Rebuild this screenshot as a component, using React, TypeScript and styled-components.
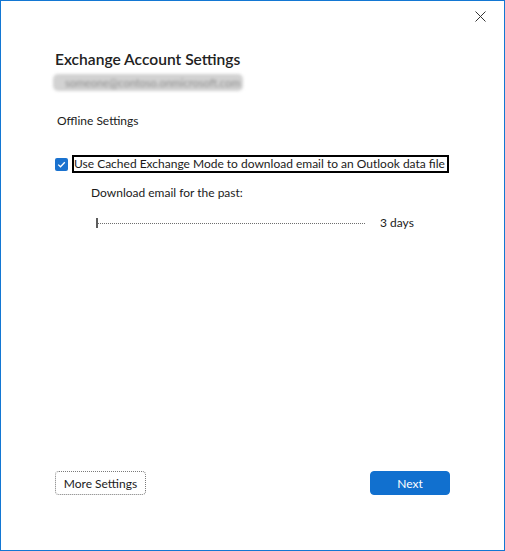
import React from "react";
import styled, { createGlobalStyle } from "styled-components";

const GlobalStyle = createGlobalStyle`
  html, body {
    margin: 0;
    padding: 0;
    background: #ffffff;
  }
  body {
    font-family: "Segoe UI", Lato, "Noto Sans", sans-serif;
    color: #1b1b1b;
  }
`;

const Window = styled.div`
  width: 505px;
  height: 551px;
  box-sizing: border-box;
  border: 1px solid #1377d3;
  background: #ffffff;
  display: flex;
  flex-direction: column;
`;

const TitleBar = styled.div`
  height: 31px;
  display: flex;
  justify-content: flex-end;
  align-items: center;
  padding-right: 12px;
`;

const CloseButton = styled.button`
  width: 24px;
  height: 24px;
  border: none;
  background: transparent;
  padding: 0;
  display: flex;
  align-items: center;
  justify-content: center;
  cursor: pointer;
`;

const Body = styled.div`
  flex: 1;
  display: flex;
  flex-direction: column;
  padding: 0 54px 55px 54px;
`;

const Heading = styled.h1`
  margin: 16px 0 0 0;
  font-size: 15.6px;
  line-height: 22px;
  font-weight: 600;
  color: #222222;
`;

const Account = styled.div`
  margin-top: 4px;
  height: 17px;
  width: 190px;
  margin-left: -2px;
  font-size: 11px;
  line-height: 17px;
  color: #8e8e8e;
  background: #d2d2d2;
  filter: blur(1.4px);
  border-radius: 5px;
  overflow: hidden;
  white-space: nowrap;
  padding-left: 12px;
  box-sizing: border-box;
`;

const SectionLabel = styled.div`
  margin-top: 22px;
  margin-left: 2px;
  font-size: 12px;
  line-height: 16px;
`;

const CheckRow = styled.label`
  margin-top: 26px;
  display: flex;
  align-items: center;
  gap: 4px;
  height: 18px;
`;

const CheckBox = styled.span`
  width: 13px;
  height: 13px;
  border-radius: 2px;
  background: #1a72cf;
  display: flex;
  align-items: center;
  justify-content: center;
  flex-shrink: 0;
`;

const FocusText = styled.span`
  box-sizing: border-box;
  height: 18px;
  border: 2px solid #000000;
  padding: 0 1px 0 0;
  font-size: 12px;
  line-height: 14px;
  white-space: nowrap;
  width: 377px;
`;

const Indent = styled.div`
  padding-left: 36px;
  display: flex;
  flex-direction: column;
`;

const Label = styled.div`
  margin-top: 12px;
  font-size: 12px;
  line-height: 16px;
`;

const SliderRow = styled.div`
  margin-top: 14px;
  height: 16px;
  display: flex;
  align-items: center;
  padding-left: 5px;
`;

const Track = styled.div`
  width: 269px;
  height: 10px;
  display: flex;
  align-items: center;
`;

const TrackLine = styled.div`
  flex: 1;
  border-top: 1px dotted #6e6e6e;
  height: 0;
`;

const Thumb = styled.div`
  width: 2px;
  height: 10px;
  background: #5c5c5c;
`;

const SliderValue = styled.span`
  margin-left: 15px;
  font-size: 12px;
  line-height: 16px;
`;

const Spacer = styled.div`
  flex: 1;
`;

const Footer = styled.div`
  display: flex;
  justify-content: space-between;
  align-items: center;
`;

const Button = styled.button<{ $primary?: boolean }>`
  height: 24px;
  box-sizing: border-box;
  border-radius: 4px;
  font-family: inherit;
  font-size: 12px;
  padding: 0;
  width: ${(p) => (p.$primary ? "80px" : "91px")};
  background: ${(p) => (p.$primary ? "#1170cf" : "#ffffff")};
  color: ${(p) => (p.$primary ? "#ffffff" : "#1b1b1b")};
  border: ${(p) => (p.$primary ? "1px solid #1170cf" : "1px dotted #7a7a7a")};
  cursor: pointer;
`;

export default function App() {
  return (
    <>
      <GlobalStyle />
      <Window>
        <TitleBar>
          <CloseButton aria-label="Close">
            <svg width="11" height="11" viewBox="0 0 11 11">
              <path d="M0.5 0.5 L10.5 10.5 M10.5 0.5 L0.5 10.5" stroke="#333" strokeWidth="1" />
            </svg>
          </CloseButton>
        </TitleBar>
        <Body>
          <Heading>Exchange Account Settings</Heading>
          <Account>someone@contoso.onmicrosoft.com</Account>
          <SectionLabel>Offline Settings</SectionLabel>
          <CheckRow>
            <CheckBox>
              <svg width="9" height="9" viewBox="0 0 9 9">
                <path d="M1.2 4.6 L3.5 6.8 L7.8 2.2" stroke="#fff" strokeWidth="1.3" fill="none" />
              </svg>
            </CheckBox>
            <FocusText>Use Cached Exchange Mode to download email to an Outlook data file</FocusText>
          </CheckRow>
          <Indent>
            <Label>Download email for the past:</Label>
            <SliderRow>
              <Track>
                <Thumb />
                <TrackLine />
              </Track>
              <SliderValue>3 days</SliderValue>
            </SliderRow>
          </Indent>
          <Spacer />
          <Footer>
            <Button>More Settings</Button>
            <Button $primary>Next</Button>
          </Footer>
        </Body>
      </Window>
    </>
  );
}
